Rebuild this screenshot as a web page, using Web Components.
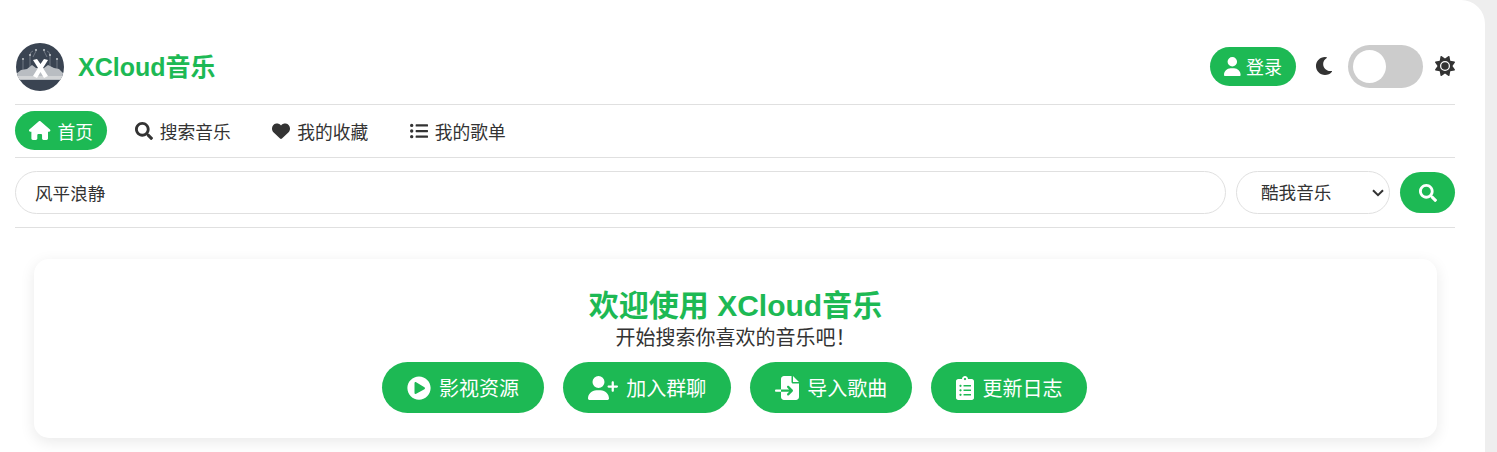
<!DOCTYPE html>
<html lang="zh">
<head>
<meta charset="utf-8">
<title>XCloud音乐</title>
<style>
  html, body { margin:0; padding:0; height:100%; overflow:hidden; background:#eeeeee; }
  body { font-family:"Liberation Sans","Noto Sans CJK SC",sans-serif; color:#333; }
</style>
</head>
<body>
<app-shell>
  <site-header></site-header>
  <main-nav></main-nav>
  <search-bar></search-bar>
  <welcome-card></welcome-card>
</app-shell>
<script>
const ICONS = {
  house: ['0 0 576 512', 'M575.8 255.5c0 18-15 32.1-32 32.1h-32l.7 160.2c0 2.7-.2 5.4-.5 8.1V472c0 22.1-17.9 40-40 40H456c-1.1 0-2.2 0-3.3-.1c-1.4 .1-2.8 .1-4.2 .1H416 392c-22.1 0-40-17.9-40-40V448 384c0-17.7-14.3-32-32-32H256c-17.7 0-32 14.3-32 32v64 24c0 22.1-17.9 40-40 40H160 128.1c-1.5 0-3-.1-4.5-.2c-1.2 .1-2.4 .2-3.6 .2H104c-22.1 0-40-17.9-40-40V360c0-.9 0-1.9 .1-2.8V287.6H32c-18 0-32-14-32-32.1c0-9 3-17 10-24L266.4 8c7-7 15-8 22-8s15 2 21 7L564.8 231.5c8 7 12 15 11 24z'],
  search: ['0 0 512 512', 'M505 442.7L405.3 343c-4.5-4.5-10.6-7-17-7H372c27.6-35.3 44-79.7 44-128C416 93.1 322.9 0 208 0S0 93.1 0 208s93.1 208 208 208c48.3 0 92.7-16.4 128-44v16.3c0 6.4 2.5 12.5 7 17l99.7 99.7c9.4 9.4 24.6 9.4 33.9 0l28.3-28.3c9.4-9.4 9.4-24.6.1-34zM208 336c-70.7 0-128-57.2-128-128 0-70.7 57.2-128 128-128 70.7 0 128 57.2 128 128 0 70.7-57.2 128-128 128z'],
  heart: ['0 0 512 512', 'M47.6 300.4L228.3 469.1c7.5 7 17.4 10.9 27.7 10.9s20.2-3.9 27.7-10.9L464.4 300.4c30.4-28.3 47.6-68 47.6-109.5v-5.8c0-69.9-50.5-129.5-119.4-141C347 36.5 300.6 51.4 268 84L256 96 244 84c-32.6-32.6-79-47.5-124.6-39.9C50.5 55.6 0 115.2 0 185.1v5.8c0 41.5 17.2 81.2 47.6 109.5z'],
  list: ['0 0 512 512', 'M48 48a48 48 0 1 0 48 48 48 48 0 0 0-48-48zm0 160a48 48 0 1 0 48 48 48 48 0 0 0-48-48zm0 160a48 48 0 1 0 48 48 48 48 0 0 0-48-48zm448 16H176a16 16 0 0 0-16 16v32a16 16 0 0 0 16 16h320a16 16 0 0 0 16-16v-32a16 16 0 0 0-16-16zm0-320H176a16 16 0 0 0-16 16v32a16 16 0 0 0 16 16h320a16 16 0 0 0 16-16V80a16 16 0 0 0-16-16zm0 160H176a16 16 0 0 0-16 16v32a16 16 0 0 0 16 16h320a16 16 0 0 0 16-16v-32a16 16 0 0 0-16-16z'],
  user: ['0 0 448 512', 'M224 256A128 128 0 1 0 224 0a128 128 0 1 0 0 256zm-45.700 48C79.800 304 0 383.800 0 482.300C0 498.700 13.300 512 29.700 512H418.300c16.400 0 29.700-13.300 29.700-29.700C448 383.800 368.200 304 269.700 304H178.300z'],
  moon: ['0 0 512 512', 'M283.211 512c78.962 0 151.079-35.925 198.857-94.792 7.068-8.708-.639-21.43-11.562-19.35-124.203 23.654-238.262-71.576-238.262-196.954 0-72.222 38.662-138.635 101.498-174.394 9.686-5.512 7.25-20.197-3.756-22.23A258.156 258.156 0 0 0 283.211 0c-141.309 0-256 114.511-256 256 0 141.309 114.511 256 256 256z'],
  sun: ['0 0 512 512', 'M361.5 1.2c5 2.1 8.6 6.6 9.6 11.9L391 121l107.9 19.8c5.3 1 9.8 4.6 11.9 9.6s1.5 10.7-1.6 15.2L446.9 256l62.3 90.3c3.1 4.5 3.7 10.2 1.6 15.2s-6.6 8.6-11.9 9.6L391 391 371.1 498.9c-1 5.3-4.6 9.8-9.6 11.9s-10.7 1.5-15.2-1.6L256 446.9l-90.3 62.3c-4.5 3.1-10.2 3.7-15.2 1.6s-8.6-6.6-9.6-11.9L121 391 13.1 371.1c-5.3-1-9.8-4.6-11.9-9.6s-1.5-10.7 1.6-15.2L65.1 256 2.8 165.7c-3.1-4.5-3.7-10.2-1.6-15.2s6.6-8.6 11.9-9.6L121 121 140.9 13.1c1-5.3 4.6-9.8 9.6-11.9s10.7-1.5 15.2 1.6L256 65.1 346.3 2.8c4.5-3.1 10.2-3.7 15.2-1.6zM160 256a96 96 0 1 1 192 0 96 96 0 1 1 -192 0zm224 0a128 128 0 1 0 -256 0 128 128 0 1 0 256 0z'],
  play: ['0 0 512 512', 'M256 8C119 8 8 119 8 256s111 248 248 248 248-111 248-248S393 8 256 8zm115.7 272l-176 101c-15.8 8.8-35.7-2.5-35.7-21V152c0-18.4 19.8-29.8 35.7-21l176 107c16.4 9.2 16.4 32.9 0 42z'],
  userplus: ['0 0 640 512', 'M96 128a128 128 0 1 1 256 0A128 128 0 1 1 96 128zM0 482.3C0 383.8 79.8 304 178.3 304h91.4C368.2 304 448 383.8 448 482.3c0 16.4-13.3 29.7-29.7 29.7H29.7C13.3 512 0 498.7 0 482.3zM504 312V248H440c-13.3 0-24-10.7-24-24s10.7-24 24-24h64V136c0-13.3 10.7-24 24-24s24 10.7 24 24v64h64c13.3 0 24 10.7 24 24s-10.7 24-24 24H552v64c0 13.3-10.7 24-24 24s-24-10.7-24-24z'],
  fileimport: ['0 0 512 512', 'M128 64c0-35.3 28.7-64 64-64H352V128c0 17.7 14.3 32 32 32H512V448c0 35.3-28.7 64-64 64H192c-35.3 0-64-28.7-64-64V336H302.1l-39 39c-9.4 9.4-9.4 24.6 0 33.9s24.6 9.4 33.9 0l80-80c9.4-9.4 9.4-24.6 0-33.9l-80-80c-9.4-9.4-24.6-9.4-33.9 0s-9.4 24.6 0 33.9l39 39H128V64zm0 224v48H24c-13.3 0-24-10.7-24-24s10.7-24 24-24H128zM512 128H384V0L512 128z'],
  clipboard: ['0 0 384 512', 'M336 64h-80c0-35.3-28.7-64-64-64s-64 28.7-64 64H48C21.5 64 0 85.5 0 112v352c0 26.5 21.5 48 48 48h288c26.5 0 48-21.5 48-48V112c0-26.5-21.5-48-48-48zM96 424c-13.3 0-24-10.7-24-24s10.7-24 24-24 24 10.7 24 24-10.7 24-24 24zm0-96c-13.3 0-24-10.7-24-24s10.7-24 24-24 24 10.7 24 24-10.7 24-24 24zm0-96c-13.3 0-24-10.7-24-24s10.7-24 24-24 24 10.7 24 24-10.7 24-24 24zm96-192c13.3 0 24 10.7 24 24s-10.7 24-24 24-24-10.7-24-24 10.7-24 24-24zm128 368c0 4.4-3.6 8-8 8H168c-4.4 0-8-3.6-8-8v-16c0-4.4 3.6-8 8-8h144c4.4 0 8 3.6 8 8v16zm0-96c0 4.4-3.6 8-8 8H168c-4.4 0-8-3.6-8-8v-16c0-4.4 3.6-8 8-8h144c4.4 0 8 3.6 8 8v16zm0-96c0 4.4-3.6 8-8 8H168c-4.4 0-8-3.6-8-8v-16c0-4.4 3.6-8 8-8h144c4.4 0 8 3.6 8 8v16z']
};

function icon(name, h) {
  const [vb, d] = ICONS[name];
  const w = h * vb.split(' ')[2] / 512;
  return `<svg width="${w}" height="${h}" viewBox="${vb}" fill="currentColor" aria-hidden="true" style="flex:none;display:block"><path d="${d}"/></svg>`;
}

// ===== SHELL =====
customElements.define('app-shell', class extends HTMLElement {
  connectedCallback() {
    this.attachShadow({ mode: 'open' });
    this.shadowRoot.innerHTML = `
      <style>
        :host { display:block; box-sizing:border-box; width:1485px; height:452px; padding:33px 30px 0 15px; background:#fff; border-top-right-radius:24px; }
      </style>
      <slot></slot>
    `;
  }
});

// ===== HEADER =====
customElements.define('site-header', class extends HTMLElement {
  connectedCallback() {
    this.attachShadow({ mode: 'open' });
    this.shadowRoot.innerHTML = `
      <style>
        :host { display:flex; align-items:center; justify-content:space-between; height:68px; padding-bottom:3px; border-bottom:1px solid #e0e0e0; }
        .brand { display:flex; align-items:center; gap:14px; padding-left:1px; }
        .brand svg { display:block; }
        h1 { margin:0; font-size:25px; font-weight:700; color:#1db954; line-height:1; }
        .tools { display:flex; align-items:center; padding-bottom:2px; }
        .login { display:flex; align-items:center; gap:5px; height:39px; padding:0 14px; background:#1db954; color:#fff; border-radius:20px; font-size:18px; margin-right:19px; }
        .moon { color:#333; margin-right:15px; }
        .switch { width:75px; height:43px; border-radius:22px; background:#ccc; padding:5px; box-sizing:border-box; margin-right:12px; }
        .knob { width:33px; height:33px; border-radius:50%; background:#fff; }
        .sun { color:#333; }
      </style>
      <div class="brand">
        <svg width="48" height="48" viewBox="0 0 48 48">
          <defs><clipPath id="c"><circle cx="24" cy="24" r="24"/></clipPath></defs>
          <g clip-path="url(#c)">
            <rect width="48" height="48" fill="#3a4452"/>
            <g stroke="#7d8590" stroke-width=".8" fill="none">
              <path d="M7 27V17M14 24V12q0-3 3-4M34 24V12q0-3-3-4M41 27V17M20 8l-3 6M28 8l3 6"/>
            </g>
            <g fill="#c4c8cd"><circle cx="7" cy="16" r="1"/><circle cx="14" cy="12" r="1"/><circle cx="20" cy="7" r="1"/><circle cx="28" cy="7" r="1"/><circle cx="34" cy="12" r="1"/><circle cx="41" cy="16" r="1"/></g>
            <path d="M0 31l5-4 6-1 5-4 4 3h8l4-3 6 3 5 1 5 5v6H0z" fill="#b9bdc2"/>
            <rect x="0" y="33" width="48" height="3" fill="#d2d4d6"/>
            <path d="M17 17l4-1 3.500 5 3.500-5 4 1-5 8 5 8-4 2-3.500-6-3.500 6-4-2 5-8z" fill="#fff"/>
          </g>
        </svg>
        <h1>XCloud音乐</h1>
      </div>
      <div class="tools">
        <div class="login">${icon('user', 19)}<span>登录</span></div>
        <div class="moon">${icon('moon', 18)}</div>
        <div class="switch"><div class="knob"></div></div>
        <div class="sun">${icon('sun', 20)}</div>
      </div>
    `;
  }
});

// ===== NAV =====
customElements.define('main-nav', class extends HTMLElement {
  connectedCallback() {
    this.attachShadow({ mode: 'open' });
    const items = [['house','首页',19,true],['search','搜索音乐',18],['heart','我的收藏',18],['list','我的歌单',18]];
    this.shadowRoot.innerHTML = `
      <style>
        :host { display:flex; align-items:flex-start; gap:13.5px; height:46px; padding-top:6px; border-bottom:1px solid #e0e0e0; }
        a { display:flex; align-items:center; gap:7px; height:39px; padding:0 14px; border-radius:20px; font-size:17.76px; color:#333; }
        a.on { background:#1db954; color:#fff; padding:0 14.2px; }
      </style>
      ${items.map(([i,t,h,on]) => `<a class="${on?'on':''}">${icon(i,h)}<span>${t}</span></a>`).join('')}
    `;
  }
});

// ===== SEARCH =====
customElements.define('search-bar', class extends HTMLElement {
  connectedCallback() {
    this.attachShadow({ mode: 'open' });
    this.shadowRoot.innerHTML = `
      <style>
        :host { display:flex; align-items:center; gap:10px; height:69px; border-bottom:1px solid #e0e0e0; }
        input, select { box-sizing:border-box; height:43px; border:1px solid #e0e0e0; background:#fff; font:17.6px "Liberation Sans","Noto Sans CJK SC",sans-serif; color:#333; outline:none; border-radius:22px; }
        input { flex:1; min-width:0; padding:0 19px; }
        .pick { position:relative; display:block; }
        select { display:block; width:154px; padding:0 0 0 24px; appearance:none; -webkit-appearance:none; }
        .pick svg { position:absolute; right:6px; top:18px; pointer-events:none; }
        button { width:55px; height:41px; border:0; border-radius:21px; background:#1db954; color:#fff; display:flex; align-items:center; justify-content:center; padding:0; }
      </style>
      <input value="风平浪静">
      <div class="pick">
        <select><option>酷我音乐</option></select>
        <svg width="12" height="8" viewBox="0 0 12 8" fill="none" stroke="#333" stroke-width="2"><path d="M1 1.200l5 5 5-5"/></svg>
      </div>
      <button>${icon('search', 18)}</button>
    `;
  }
});

// ===== WELCOME =====
customElements.define('welcome-card', class extends HTMLElement {
  connectedCallback() {
    this.attachShadow({ mode: 'open' });
    const btns = [['play','影视资源',24],['userplus','加入群聊',24],['fileimport','导入歌曲',24],['clipboard','更新日志',24]];
    this.shadowRoot.innerHTML = `
      <style>
        :host { display:flex; flex-direction:column; align-items:center; box-sizing:border-box; height:179px; margin:31px 18px 0 19px; padding:29px 0 0; background:#fff; border-radius:15px; box-shadow:0 4px 15px rgba(0,0,0,.09); }
        h2 { margin:0 0 1px; font-size:30px; font-weight:700; color:#1db954; line-height:36px; }
        p { margin:0; font-size:20px; line-height:27px; color:#333; }
        .row { display:flex; gap:18.67px; margin:10px 2px 0 0; }
        a { display:flex; align-items:center; gap:8.5px; height:51px; padding:0 25px; border-radius:26px; background:#1db954; color:#fff; font-size:20px; }
      </style>
      <h2>欢迎使用 XCloud音乐</h2>
      <p>开始搜索你喜欢的音乐吧！</p>
      <div class="row">
        ${btns.map(([i,t,h]) => `<a>${icon(i,h)}<span>${t}</span></a>`).join('')}
      </div>
    `;
  }
});
</script>
</body>
</html>
